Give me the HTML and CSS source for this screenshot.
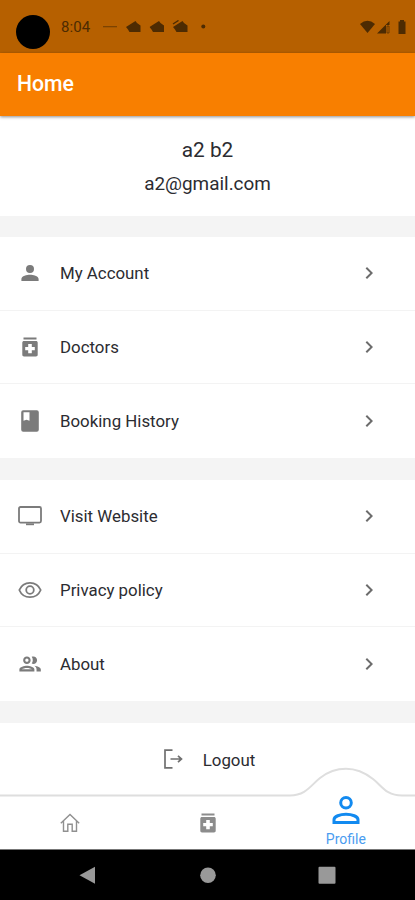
FILE: index.html
```html
<!DOCTYPE html>
<html lang="en">
<head>
<meta charset="utf-8">
<meta name="viewport" content="width=device-width, initial-scale=1">
<title>Home</title>
<link rel="stylesheet" href="styles.css">
</head>
<body>
<svg class="defs" aria-hidden="true">
  <symbol id="chevron" viewBox="0 0 24 24"><path d="M8.6 16.6 13.2 12 8.6 7.4 10 6l6 6-6 6z"/></symbol>
  <symbol id="medicine" viewBox="0 0 24 24"><path d="M5.500 2.500h13v2h-13zM18 6H6c-1 0-1.700.7-1.700 1.700v12.100c0 1 .7 1.700 1.700 1.700h12c1 0 1.700-.7 1.700-1.700V7.700C19.700 6.700 19 6 18 6zm-1.200 9.300h-3v3h-3.600v-3h-3v-3.400h3v-3h3.600v3h3z"/></symbol>
  <symbol id="cloud" viewBox="0 0 15 13"><path d="M0 7 5.500 3.500 9.500 1l1.500 2 3.500 2.500V12H3.500L2 9.500z"/></symbol>
</svg>
<div class="phone">
  <header class="status">
    <span class="camera"></span>
    <span class="time">8:04</span>
    <svg class="notices" viewBox="0 0 104 14">
      <path d="M0 6h14v1.300H0z" opacity=".55"/>
      <use href="#cloud" x="23" y="0" width="15" height="13"/>
      <use href="#cloud" x="46.500" y="0" width="15" height="13"/>
      <use href="#cloud" x="70" y="0" width="15" height="13"/>
      <path d="M70 4 75.500 .4" stroke="#4d2b02" stroke-width="1.300"/>
      <circle cx="100.300" cy="6.500" r="2"/>
    </svg>
    <svg class="signals" viewBox="0 0 48 15">
      <path d="M0 4Q7.500-2.500 15 4L7.500 13z"/>
      <path d="M17 13.500 29.500 1v4H26v8.500z"/><path d="M27 6h2v7h-2z" fill="none" stroke="#4d2b02" stroke-width=".7"/>
      <path d="M38.500 1.500H40V0h4v1.500h1.500V14h-7z"/>
    </svg>
  </header>
  <div class="appbar"><h1>Home</h1></div>
  <main>
    <section class="card user"><div class="name">a2 b2</div><div class="mail">a2@gmail.com</div></section>
    <section class="card">
      <a class="row"><svg class="icon" viewBox="0 0 24 24"><path d="M12 12a4 4 0 1 0 0-8 4 4 0 0 0 0 8zm0 1.800c-2.900 0-8.600 1.300-8.600 4.200v2h17.200v-2c0-2.900-5.700-4.200-8.600-4.200z"/></svg><span>My Account</span><svg class="chev"><use href="#chevron"/></svg></a>
      <a class="row"><svg class="icon"><use href="#medicine"/></svg><span>Doctors</span><svg class="chev"><use href="#chevron"/></svg></a>
      <a class="row"><svg class="icon" viewBox="0 0 24 24"><path fill-rule="evenodd" d="M5.200 1.300h13.600a2 2 0 0 1 2 2v17.400a2 2 0 0 1-2 2H5.200a2 2 0 0 1-2-2V3.300a2 2 0 0 1 2-2zM5.500 3.300v8.400l3-1 3 1V3.300z"/></svg><span>Booking History</span><svg class="chev"><use href="#chevron"/></svg></a>
    </section>
    <section class="card">
      <a class="row"><svg class="icon line" viewBox="0 0 24 24"><rect x="1" y="3" width="22" height="15.600" rx="1.500"/><path d="M8 20.300h8"/></svg><span>Visit Website</span><svg class="chev"><use href="#chevron"/></svg></a>
      <a class="row"><svg class="icon line" viewBox="0 0 24 24"><path d="M1.300 12C3.200 7.500 7.200 4.800 12 4.800S20.800 7.500 22.700 12C20.800 16.500 16.800 19.200 12 19.200S3.200 16.500 1.300 12z"/><circle cx="12" cy="12" r="3.800"/></svg><span>Privacy policy</span><svg class="chev"><use href="#chevron"/></svg></a>
      <a class="row"><svg class="icon" viewBox="0.700 0.900 22.400 22.400"><path d="M9 13.750c-2.340 0-7 1.170-7 3.500V19h14v-1.750c0-2.330-4.660-3.500-7-3.500zM4.340 17c.84-.58 2.870-1.250 4.660-1.250s3.820.67 4.660 1.250H4.340zM9 12c1.930 0 3.500-1.570 3.500-3.500S10.930 5 9 5 5.500 6.570 5.500 8.500 7.070 12 9 12zm0-5c.83 0 1.500.67 1.500 1.500S9.830 10 9 10s-1.500-.67-1.500-1.500S8.170 7 9 7zm7.040 6.810c1.160.84 1.960 1.960 1.960 3.440V19h4v-1.750c0-2.020-3.500-3.170-5.960-3.440zM15 12c1.930 0 3.500-1.570 3.500-3.500S16.930 5 15 5c-.54 0-1.040.13-1.500.35.630.89 1 1.980 1 3.150s-.37 2.260-1 3.150c.46.220.96.350 1.500.35z"/></svg><span>About</span><svg class="chev"><use href="#chevron"/></svg></a>
    </section>
    <section class="card logout">
      <svg class="exit" viewBox="0 0 20 20"><path d="M9.500 1.200H2v17.600h7.500M7.500 10H18M15 6.800l3.500 3.200-3.500 3.200"/></svg><span>Logout</span>
    </section>
  </main>
  <nav class="tabs">
    <svg class="bump" viewBox="0 0 415 32"><path class="fill" d="M0 29.500H290C306 29.500 311 19 320 12S336 2.800 346 2.800 364 6 373 13 386 29.500 402 29.500H415V32H0z"/><path class="edge" d="M0 29.500H290C306 29.500 311 19 320 12S336 2.800 346 2.800 364 6 373 13 386 29.500 402 29.500H415"/></svg>
    <a class="tab"><svg class="home" viewBox="0 0 20 20"><path d="M.8 10.300 10 1.500l9.200 8.800M3.500 8v10.300h4.300v-7h4.400v7h4.300V8"/></svg></a>
    <a class="tab"><svg class="pill"><use href="#medicine"/></svg></a>
    <a class="tab active"><svg class="person" viewBox="0 0 28 30"><circle cx="14" cy="7.800" r="5.300"/><path d="M2 27.500v-2.800C2 21.500 8 19.200 14 19.200s12 2.300 12 5.500v2.800z"/></svg><span>Profile</span></a>
  </nav>
  <footer class="system">
    <svg viewBox="0 0 18 18"><path d="M.5 9.300 16 .8v17z"/></svg>
    <svg viewBox="0 0 18 18"><circle cx="9" cy="9.300" r="7.800"/></svg>
    <svg viewBox="0 0 18 18"><rect x=".5" y=".8" width="17" height="17" rx="1"/></svg>
  </footer>
</div>
</body>
</html>
```
FILE: styles.css
```css
* { box-sizing: border-box; }
body { margin: 0; font-family: Roboto, "Liberation Sans", sans-serif; color: #2c2c31; background: #fff; }
.defs { position: absolute; width: 0; height: 0; }
svg { display: block; flex: none; }
.phone { display: flex; flex-direction: column; width: 415px; height: 900px; overflow: hidden; }
.status { display: flex; height: 52.500px; flex: none; background: #b66000; color: #4d2b02; fill: #4d2b02; padding: 0 7px 0 16px; }
.camera { width: 34px; height: 34px; margin-top: 15px; border-radius: 50%; background: #000; }
.time { margin: 18px 0 0 11px; width: 42px; font-size: 15px; line-height: 18px; letter-spacing: .1px; }
.notices { width: 104px; height: 14px; margin: 20px 0 0; }
.signals { width: 48px; height: 15px; margin: 20px 0 0 auto; }
.appbar { height: 63.500px; flex: none; background: #f87f00; padding: 18px 17px; box-shadow: 0 1px 3px rgba(0,0,0,.45); z-index: 1; }
h1 { margin: 0; color: #fff; font-size: 21.200px; line-height: 25px; font-weight: 500; }
main { display: flex; flex-direction: column; gap: 22px; height: 680px; flex: none; background: #f4f4f4; }
.card { background: #fff; }
.user { height: 100px; flex: none; text-align: center; padding-top: 21px; margin-bottom: -1px; }
.name { font-size: 20.800px; line-height: 26px; }
.mail { font-size: 18.900px; line-height: 24px; margin-top: 9px; }
.row { display: flex; align-items: center; height: 73.700px; padding: 0 34px 0 18px; font-size: 16.850px; border-bottom: 1px solid #f3f3f3; }
.row:last-child { border-bottom: 0; }
.row span { flex: 1; margin-left: 18px; }
.icon { width: 24px; height: 24px; fill: #7b7b7b; }
.line { fill: none; stroke: #7b7b7b; stroke-width: 1.800; }
.chev { width: 24px; height: 24px; fill: #6c6c6c; }
.logout { flex: 1; display: flex; justify-content: center; padding: 26px 0 0 3px; gap: 20px; font-size: 16.850px; line-height: 22px; }
.exit { width: 20px; height: 20px; fill: none; stroke: #707070; stroke-width: 1.700; }
.tabs { position: relative; display: flex; flex: none; height: 54px; background: #fff; border-bottom: 1px solid #777; }
.bump { position: absolute; left: 0; bottom: 51px; width: 415px; height: 32px; }
.fill { fill: #fff; }
.edge { fill: none; stroke: #dedede; stroke-width: 2; }
.tab { position: relative; flex: 1; display: flex; flex-direction: column; align-items: center; padding-top: 16px; }
.home { width: 20px; height: 20px; margin: 1px 0 0 1px; fill: none; stroke: #909090; stroke-width: 1.400; }
.pill { width: 24px; height: 24px; fill: #8c8c8c; margin: -1px 0 0 1px; }
.person { width: 28px; height: 30px; margin-top: -17px; fill: none; stroke: #128af0; stroke-width: 3; }
.active span { color: #4a9cf0; font-size: 14px; line-height: 18px; margin-top: 5px; }
.system { height: 50px; flex: none; background: #000; display: flex; justify-content: space-between; align-items: center; padding: 0 79px; fill: #999; }
.system svg { width: 18px; height: 18px; }
```
